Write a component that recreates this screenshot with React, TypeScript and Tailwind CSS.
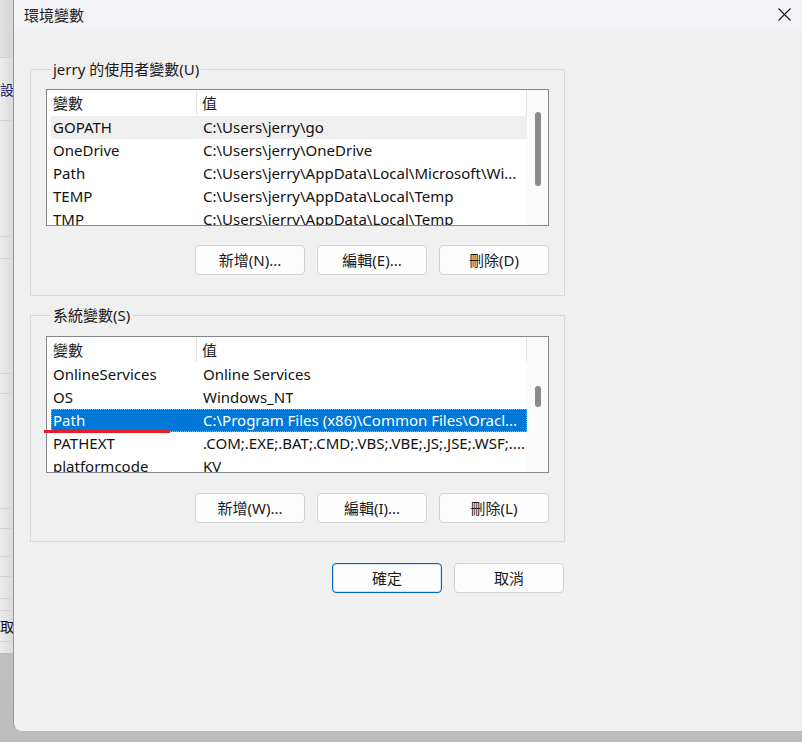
import React from "react";

type Row = { name: string; value: string };

const userRows: Row[] = [
  { name: "GOPATH", value: "C:\\Users\\jerry\\go" },
  { name: "OneDrive", value: "C:\\Users\\jerry\\OneDrive" },
  { name: "Path", value: "C:\\Users\\jerry\\AppData\\Local\\Microsoft\\Wi..." },
  { name: "TEMP", value: "C:\\Users\\jerry\\AppData\\Local\\Temp" },
  { name: "TMP", value: "C:\\Users\\jerry\\AppData\\Local\\Temp" },
];

const sysRows: Row[] = [
  { name: "OnlineServices", value: "Online Services" },
  { name: "OS", value: "Windows_NT" },
  { name: "Path", value: "C:\\Program Files (x86)\\Common Files\\Oracl..." },
  { name: "PATHEXT", value: ".COM;.EXE;.BAT;.CMD;.VBS;.VBE;.JS;.JSE;.WSF;...." },
  { name: "platformcode", value: "KV" },
];

function ListBox({
  rows,
  hover,
  selected,
  thumbTop,
  thumbH,
  mark,
}: {
  rows: Row[];
  hover?: number;
  selected?: number;
  thumbTop: string;
  thumbH: string;
  mark?: boolean;
}) {
  return (
    <div className="relative w-[503px] h-[137px] border border-[#828790] bg-white flex">
      <div className="w-[480px] flex flex-col overflow-hidden">
        <div className="h-[26px] shrink-0 flex items-center border-r border-[#e5e5e5] text-[#1a1a1a]">
          <div className="w-[150px] h-[24px] pl-[6px] flex items-center border-r border-[#e5e5e5]">變數</div>
          <div className="pl-[5px] flex items-center">值</div>
        </div>
        <div className="flex flex-col pl-[4px]">
          {rows.map((r, i) => {
            const bg =
              i === selected
                ? "bg-[#0078d7] text-white outline outline-1 outline-dotted outline-[#7fb7e8] -outline-offset-1"
                : i === hover
                ? "bg-[#efefef] text-[#111]"
                : "text-[#111]";
            return (
              <div key={i} className={`h-[23px] shrink-0 flex items-center whitespace-nowrap ${bg}`}>
                <div className="w-[150px] pl-[2px] overflow-hidden">{r.name}</div>
                <div className="pl-[2px] overflow-hidden">{r.value}</div>
              </div>
            );
          })}
        </div>
      </div>
      <div className={`w-[21px] bg-[#fafafa] flex flex-col items-center ${thumbTop}`}>
        <div className={`w-[6px] rounded-full bg-[#8a8a8a] ${thumbH}`} />
      </div>
      {mark && <div className="absolute left-[-3px] top-[93px] w-[126px] h-[3px] bg-[#e61e27]" />}
    </div>
  );
}

function Btn({ label, primary }: { label: string; primary?: boolean }) {
  return (
    <div
      className={`w-[110px] h-[30px] rounded-[4px] flex items-center justify-center bg-[#fdfdfd] text-[#1a1a1a] ${
        primary ? "border border-[#0067c0] shadow-[inset_0_0_0_1px_#cfe3f5]" : "border border-[#d0d0d0]"
      }`}
    >
      {label}
    </div>
  );
}

function Group({
  title,
  children,
  className,
}: {
  title: string;
  children: React.ReactNode;
  className?: string;
}) {
  return (
    <fieldset className={`ml-[16px] w-[535px] border border-[#d9d9d9] px-[15px] ${className ?? ""}`}>
      <legend className="ml-[5px] px-[2px] leading-[20px] text-[#1a1a1a]">{title}</legend>
      {children}
    </fieldset>
  );
}

export default function App() {
  return (
    <div
      className="relative w-[802px] h-[742px] overflow-hidden flex bg-gradient-to-b from-[#c9c9c9] to-[#bdbdbd] text-[15px]"
      style={{ fontFamily: '"Noto Sans", "Noto Sans CJK TC", sans-serif' }}
    >
      {/* background window strip */}
      <div className="w-[13px] h-[653px] flex flex-col bg-gradient-to-r from-[#ececec] to-[#dadada] text-[#1d1d6b] overflow-hidden" style={{ fontFamily: '"Noto Sans CJK TC", sans-serif' }}>
        <div className="h-[58px] shrink-0 bg-gradient-to-r from-[#e2e2e2] to-[#d6d6d6] border-b border-[#d2d2d2]" />
        <div className="h-[63px] shrink-0 border-b border-[#d2d2d2] flex items-center text-[14px] leading-none">設</div>
        <div className="h-[116px] shrink-0 border-b border-[#d2d2d2]" />
        <div className="h-[22px] shrink-0 border-b border-[#d2d2d2]" />
        <div className="h-[115px] shrink-0 border-b border-[#d2d2d2]" />
        <div className="h-[20px] shrink-0 border-b border-[#d2d2d2]" />
        <div className="h-[115px] shrink-0 border-b border-[#d2d2d2]" />
        <div className="h-[20px] shrink-0 border-b border-[#d2d2d2]" />
        <div className="h-[28px] shrink-0 border-b border-[#d2d2d2]" />
        <div className="h-[20px] shrink-0 border-b border-[#d2d2d2]" />
        <div className="h-[22px] shrink-0 border-b border-[#d2d2d2]" />
        <div className="h-[12px] shrink-0 border-b border-[#d2d2d2]" />
        <div className="h-[31px] shrink-0 border-b border-[#d2d2d2] flex items-center text-[14px] leading-none text-[#111]">取</div>
        <div className="flex-1" />
      </div>

      {/* dialog */}
      <div className="w-[789px] h-[731px] flex flex-col bg-[#f0f0f0] border-l border-[#9a9a9a] rounded-bl-[8px] overflow-hidden text-[#1a1a1a]">
        <div className="h-[30px] shrink-0 bg-[#f3f2f7] flex items-center justify-between pl-[10px] pr-[11px]">
          <span className="text-[15px]" style={{ fontFamily: '"Noto Sans CJK TC", sans-serif' }}>環境變數</span>
          <svg width="13" height="13" viewBox="0 0 13 13" className="mt-[-1px]">
            <path d="M0.5 0.5 L12.5 12.5 M12.5 0.5 L0.5 12.5" stroke="#1a1a1a" strokeWidth="1.1" />
          </svg>
        </div>

        <Group title="jerry 的使用者變數(U)" className="mt-[29px] pb-[20px]">
          <div className="mt-[10px]">
            <ListBox rows={userRows} hover={0} thumbTop="pt-[22px]" thumbH="h-[74px]" />
          </div>
          <div className="mt-[19px] flex justify-end gap-[12px]">
            <Btn label="新增(N)..." />
            <Btn label="編輯(E)..." />
            <Btn label="刪除(D)" />
          </div>
        </Group>

        <Group title="系統變數(S)" className="mt-[9px] pb-[18px]">
          <div className="mt-[11px]">
            <ListBox rows={sysRows} selected={2} thumbTop="pt-[49px]" thumbH="h-[21px]" mark />
          </div>
          <div className="mt-[20px] flex justify-end gap-[12px]">
            <Btn label="新增(W)..." />
            <Btn label="編輯(I)..." />
            <Btn label="刪除(L)" />
          </div>
        </Group>

        <div className="ml-[16px] w-[534px] mt-[21px] flex justify-end gap-[12px]">
          <Btn label="確定" primary />
          <Btn label="取消" />
        </div>
      </div>
    </div>
  );
}
